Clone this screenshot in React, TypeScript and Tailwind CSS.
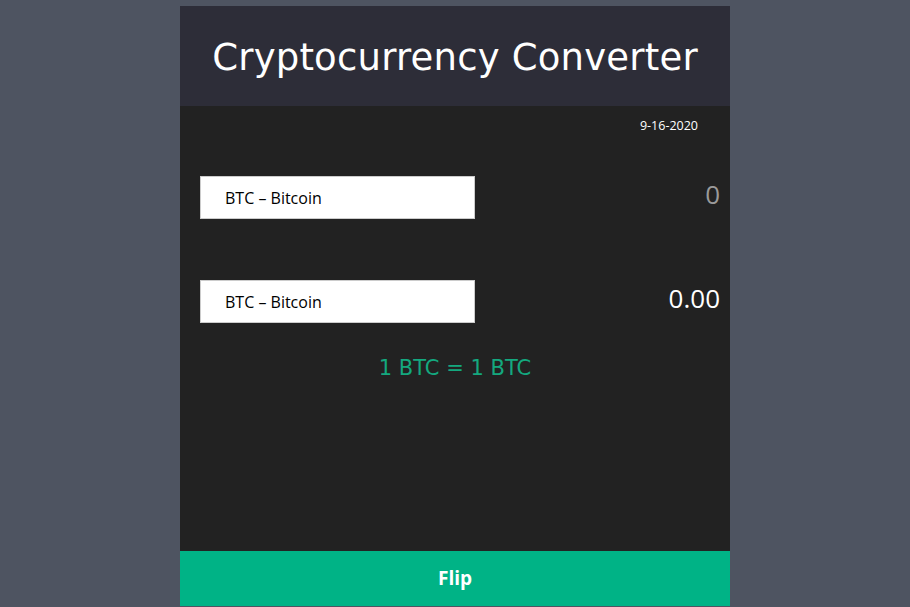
import React from "react";

export default function App() {
  return (
    <div className="w-full h-[607px] bg-[#4e5461] overflow-hidden" style={{ fontFamily: '"Open Sans", "Liberation Sans", sans-serif' }}>
      <div className="mx-auto mt-[6px] w-[550px] h-[600px] flex flex-col bg-[#222222]">
        <div className="h-[100px] bg-[#2d2d38] flex items-center justify-center">
          <h1 className="text-white text-[37px] leading-none tracking-[0.2px] mt-[2px]" style={{ fontFamily: '"DejaVu Sans", "Open Sans", sans-serif' }}>
            Cryptocurrency Converter
          </h1>
        </div>
        <div className="flex-1 flex flex-col">
          <div className="pt-[12px] pr-[32px] text-right text-white text-[12.5px] leading-[16px]">9-16-2020</div>
          <div className="mt-[42px] px-[20px] pr-[10px] flex items-center justify-between">
            <div className="w-[275px] h-[43px] bg-white border border-[#cccccc] flex items-center pl-[24px] text-[16px] text-black">
              BTC – Bitcoin
            </div>
            <div className="text-[26px] leading-none text-[#9a9a9a] -mt-[8px]">0</div>
          </div>
          <div className="mt-[61px] px-[20px] pr-[10px] flex items-center justify-between">
            <div className="w-[275px] h-[43px] bg-white border border-[#cccccc] flex items-center pl-[24px] text-[16px] text-black">
              BTC – Bitcoin
            </div>
            <div className="text-[26px] leading-none text-white -mt-[8px]">0.00</div>
          </div>
          <div className="mt-[30px] text-center text-[21px] leading-[30px] text-[#14a87f]" style={{ fontFamily: '"DejaVu Sans", "Open Sans", sans-serif' }}>
            1 BTC = 1 BTC
          </div>
        </div>
        <button className="h-[55px] w-full bg-[#00b386] text-white font-bold text-[19px]">Flip</button>
      </div>
    </div>
  );
}
